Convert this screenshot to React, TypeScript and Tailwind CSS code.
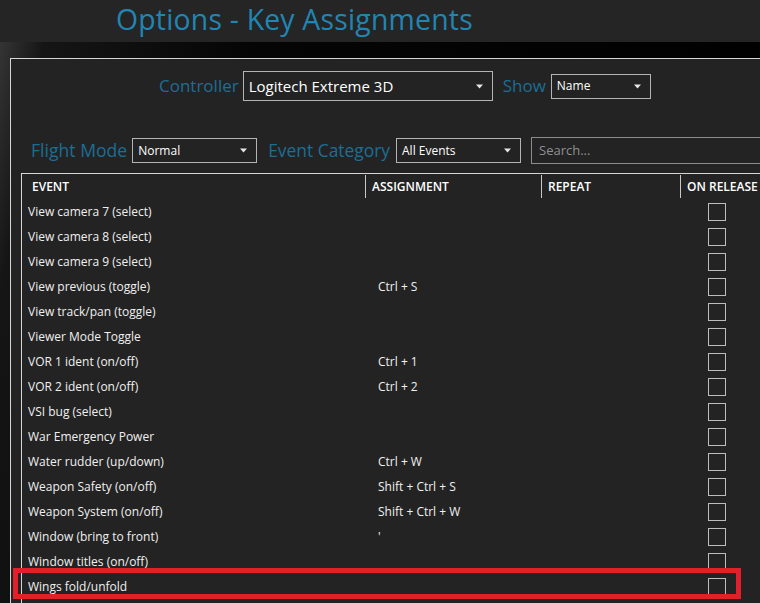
import React from 'react';

const rows: { event: string; assignment?: string }[] = [
  { event: 'View camera 7 (select)' },
  { event: 'View camera 8 (select)' },
  { event: 'View camera 9 (select)' },
  { event: 'View previous (toggle)', assignment: 'Ctrl + S' },
  { event: 'View track/pan (toggle)' },
  { event: 'Viewer Mode Toggle' },
  { event: 'VOR 1 ident (on/off)', assignment: 'Ctrl + 1' },
  { event: 'VOR 2 ident (on/off)', assignment: 'Ctrl + 2' },
  { event: 'VSI bug (select)' },
  { event: 'War Emergency Power' },
  { event: 'Water rudder (up/down)', assignment: 'Ctrl + W' },
  { event: 'Weapon Safety (on/off)', assignment: 'Shift + Ctrl + S' },
  { event: 'Weapon System (on/off)', assignment: 'Shift + Ctrl + W' },
  { event: 'Window (bring to front)', assignment: "'" },
  { event: 'Window titles (on/off)' },
  { event: 'Wings fold/unfold' },
  { event: '' },
];

const Arrow = () => (
  <svg width="7" height="5" viewBox="0 0 7 5" className="shrink-0">
    <path d="M0 0.5 L7 0.5 L3.5 4.5 Z" fill="#e6e6e6" />
  </svg>
);

const Select: React.FC<{ value: string; className: string; text: string }> = ({ value, className, text }) => (
  <div className={`flex items-center justify-between border border-[#b4b4b4] bg-[#232323] text-white ${className}`}>
    <span className={text}>{value}</span>
    <Arrow />
  </div>
);

const App: React.FC = () => {
  return (
    <div
      className="relative w-[760px] h-[603px] overflow-hidden bg-[linear-gradient(100deg,#3a3a3a_0%,#151515_6%,#050505_30%,#000_100%)] text-white"
      style={{ fontFamily: '"Open Sans", "Noto Sans", sans-serif' }}
    >
      {/* title band */}
      <div className="h-[42px] bg-[#252525] pl-[116px] flex items-center">
        <h1 className="text-[28.4px] leading-none text-[#2185b3] tracking-[0.2px] -mt-[3px]">Options - Key Assignments</h1>
      </div>

      <div className="pt-[16px] pl-[10px]">
        <div className="w-[800px] h-[560px] border border-[#d6d6d6] bg-[#232323]">
          {/* controller row */}
          <div className="flex items-center h-[30px] mt-[12px] pl-[148px]">
            <span className="text-[17px] text-[#1c6e95] mr-[4px]">Controller</span>
            <Select value="Logitech Extreme 3D" className="w-[250px] h-[30px] pl-[5px] pr-[9px]" text="text-[15px]" />
            <span className="text-[17px] text-[#1c6e95] ml-[10px] mr-[5px]">Show</span>
            <Select value="Name" className="w-[100px] h-[25px] pl-[5px] pr-[9px]" text="text-[12px]" />
          </div>

          {/* filter row */}
          <div className="flex items-center h-[27px] mt-[36px] pl-[20px]">
            <span className="text-[17.6px] text-[#1c6e95] mr-[5px]">Flight Mode</span>
            <Select value="Normal" className="w-[125px] h-[25px] pl-[5px] pr-[9px]" text="text-[12px]" />
            <span className="text-[17.4px] text-[#1c6e95] ml-[11px] mr-[6px]">Event Category</span>
            <Select value="All Events" className="w-[125px] h-[25px] pl-[5px] pr-[9px]" text="text-[12px]" />
            <div className="ml-[10px] w-[260px] h-[27px] border border-[#8c8c8c] flex items-center pl-[7px]">
              <span className="text-[13px] text-[#8f8f8f]">Search...</span>
            </div>
          </div>

          {/* table */}
          <div className="ml-[10px] mt-[9px] border-l border-t border-[#d6d6d6]">
            <div className="flex h-[25px] items-center text-[12px] font-semibold">
              <div className="w-[343px] pl-[10px]">EVENT</div>
              <div className="w-[176px] h-[23px] border-l border-[#c8c8c8] pl-[6px] flex items-center">ASSIGNMENT</div>
              <div className="w-[139px] h-[23px] border-l border-[#c8c8c8] pl-[6px] flex items-center">REPEAT</div>
              <div className="flex-1 h-[23px] border-l border-[#c8c8c8] pl-[6px] flex items-center">ON RELEASE</div>
            </div>
            {rows.map((r, i) => (
              <div key={i} className="flex h-[25px] items-center text-[12px] text-[#f0f0f0]">
                <div className="w-[344px] pl-[6px]">{r.event}</div>
                <div className="w-[175px] pl-[12px]">{r.assignment ?? ''}</div>
                <div className="w-[139px]" />
                <div className="w-[74px] flex justify-center">
                  <div className="w-[18px] h-[18px] border border-[#bdbdbd]" />
                </div>
              </div>
            ))}
          </div>
        </div>
      </div>

      {/* highlight */}
      <div className="absolute left-[13px] top-[568px] w-[728px] h-[31px] border-[5px] border-[#e1202b]" />
    </div>
  );
};

export default App;
